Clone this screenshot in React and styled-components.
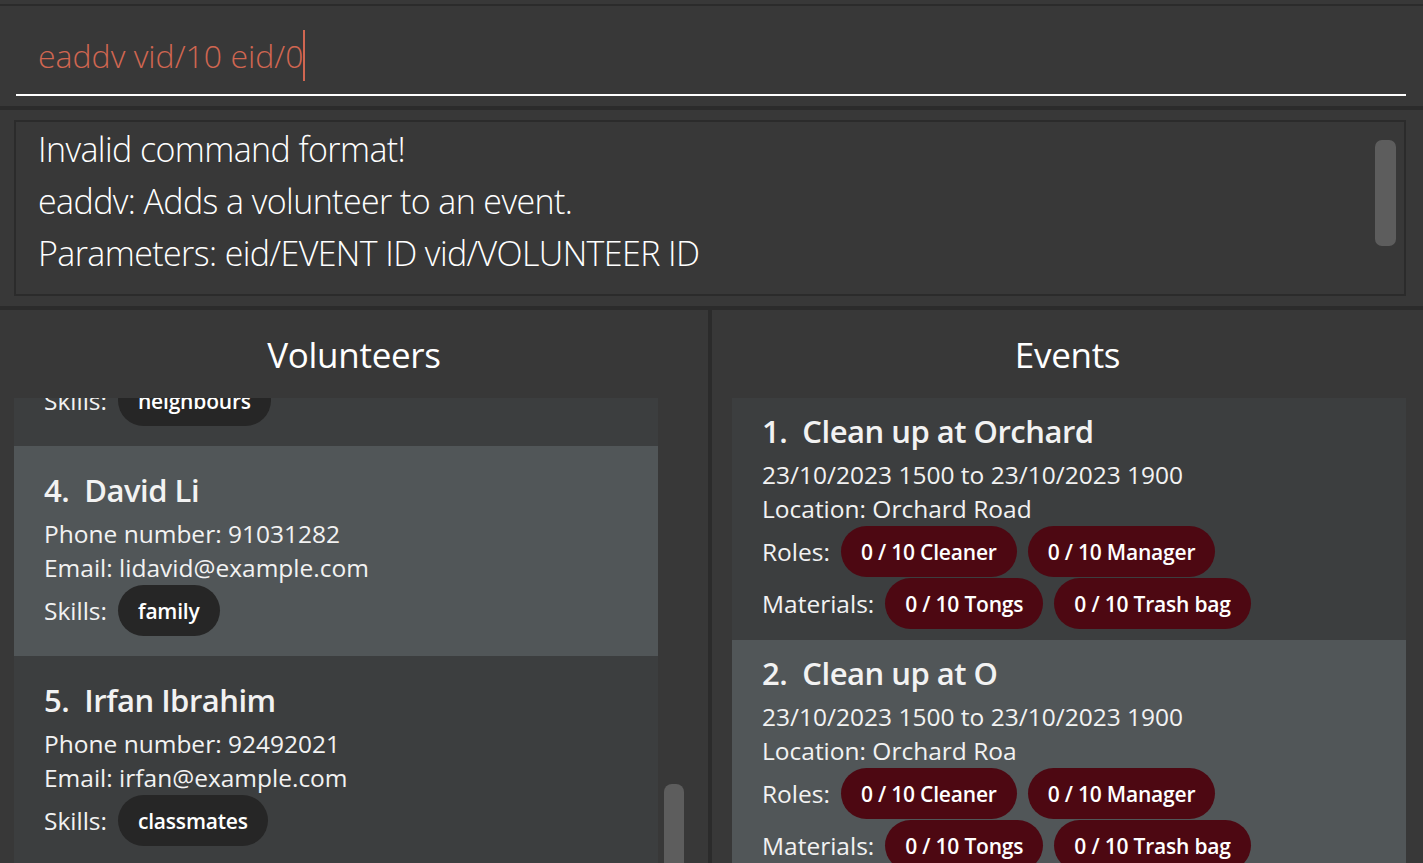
import React, { useLayoutEffect, useRef } from 'react';
import styled, { createGlobalStyle } from 'styled-components';

const volunteers = [
  { id: 1, name: 'Alex Yeoh', phone: '87438807', email: 'alexyeoh@example.com', skills: ['friends'] },
  { id: 2, name: 'Bernice Yu', phone: '99272758', email: 'berniceyu@example.com', skills: ['colleagues', 'friends'] },
  { id: 3, name: 'Charlotte Oliveiro', phone: '93210283', email: 'charlotte@example.com', skills: ['neighbours'] },
  { id: 4, name: 'David Li', phone: '91031282', email: 'lidavid@example.com', skills: ['family'] },
  { id: 5, name: 'Irfan Ibrahim', phone: '92492021', email: 'irfan@example.com', skills: ['classmates'] },
  { id: 6, name: 'Roy Balakrishnan', phone: '92624417', email: 'royb@example.com', skills: ['colleagues'] },
];

const events = [
  {
    id: 1,
    name: 'Clean up at Orchard',
    time: '23/10/2023 1500 to 23/10/2023 1900',
    location: 'Orchard Road',
    roles: ['0 / 10 Cleaner', '0 / 10 Manager'],
    materials: ['0 / 10 Tongs', '0 / 10 Trash bag'],
  },
  {
    id: 2,
    name: 'Clean up at O',
    time: '23/10/2023 1500 to 23/10/2023 1900',
    location: 'Orchard Roa',
    roles: ['0 / 10 Cleaner', '0 / 10 Manager'],
    materials: ['0 / 10 Tongs', '0 / 10 Trash bag'],
  },
];

function App() {
  const listRef = useRef(null);
  const anchorRef = useRef(null);

  // the volunteer list is scrolled so that card 4 sits just under the header
  useLayoutEffect(() => {
    if (listRef.current && anchorRef.current) {
      listRef.current.scrollTop = anchorRef.current.offsetTop - 48;
    }
  }, []);

  return (
    <Window>
      <GlobalStyle />
      <CommandBar>
        <CommandField>
          eaddv vid/10 eid/0
          <Caret />
        </CommandField>
      </CommandBar>

      <ResultBar>
        <ResultBox>
          <ResultLine>Invalid command format!</ResultLine>
          <ResultLine>eaddv: Adds a volunteer to an event.</ResultLine>
          <ResultLine>Parameters: eid/EVENT ID vid/VOLUNTEER ID</ResultLine>
          <ResultThumb />
        </ResultBox>
      </ResultBar>

      <Lists>
        <Panel $width="708px">
          <PanelTitle>Volunteers</PanelTitle>
          <ListArea ref={listRef} $left="14px" $right="50px">
            {volunteers.map((v, i) => (
              <Card key={v.id} ref={v.id === 4 ? anchorRef : null} $odd={i % 2 === 1} $top="24px" $bottom="20px">
                <CardTitle>
                  {v.id}.&nbsp;&nbsp;{v.name}
                </CardTitle>
                <CardLine>Phone number: {v.phone}</CardLine>
                <CardLine>Email: {v.email}</CardLine>
                <ChipRow>
                  <CardLine>Skills:</CardLine>
                  {v.skills.map((s) => (
                    <Chip key={s}>{s}</Chip>
                  ))}
                </ChipRow>
              </Card>
            ))}
          </ListArea>
          <ListThumb />
        </Panel>

        <Divider />

        <Panel>
          <PanelTitle>Events</PanelTitle>
          <ListArea $left="20px" $right="17px">
            {events.map((e, i) => (
              <Card key={e.id} $odd={i % 2 === 1} $top="13px" $bottom="11px">
                <CardTitle>
                  {e.id}.&nbsp;&nbsp;{e.name}
                </CardTitle>
                <CardLine>{e.time}</CardLine>
                <CardLine>Location: {e.location}</CardLine>
                <ChipRow>
                  <CardLine>Roles:</CardLine>
                  {e.roles.map((r) => (
                    <Chip key={r} $tone="event">{r}</Chip>
                  ))}
                </ChipRow>
                <ChipRow $gap="1px">
                  <CardLine>Materials:</CardLine>
                  {e.materials.map((m) => (
                    <Chip key={m} $tone="event">{m}</Chip>
                  ))}
                </ChipRow>
              </Card>
            ))}
          </ListArea>
        </Panel>
      </Lists>
    </Window>
  );
}
export default App;

const GlobalStyle = createGlobalStyle`
  html, body {
    margin: 0;
    padding: 0;
    height: 100%;
    overflow: hidden;
    background: #383838;
  }
  #root {
    height: 100%;
  }
`;

const Window = styled.div`
  height: 100vh;
  display: flex;
  flex-direction: column;
  padding-top: 4px;
  box-sizing: border-box;
  background: #383838;
  font-family: 'Open Sans', 'Noto Sans', sans-serif;
  color: #ffffff;
`;

const CommandBar = styled.div`
  border-top: 2px solid #2b2b2b;
  padding: 24px 17px 10px 16px;
`;

const CommandField = styled.div`
  height: 64px;
  border-bottom: 2px solid #ffffff;
  padding-left: 22px;
  font-size: 32px;
  font-weight: 300;
  line-height: 51px;
  color: #d06651;
  white-space: pre;
`;

const Caret = styled.span`
  display: inline-block;
  width: 2px;
  height: 51px;
  vertical-align: top;
  background: #d06651;
`;

const ResultBar = styled.div`
  border-top: 4px solid #2b2b2b;
  border-bottom: 4px solid #2b2b2b;
  padding: 10px 17px 10px 14px;
`;

const ResultBox = styled.div`
  position: relative;
  height: 176px;
  box-sizing: border-box;
  border: 2px solid #2b2b2b;
  padding: 1px 0 0 22px;
  overflow: hidden;
`;

const ResultLine = styled.div`
  font-size: 34px;
  font-weight: 300;
  letter-spacing: -0.6px;
  line-height: 52px;
  color: #ffffff;
  white-space: nowrap;
`;

const ResultThumb = styled.div`
  position: absolute;
  top: 18px;
  right: 8px;
  width: 21px;
  height: 106px;
  border-radius: 7px;
  background: #5d5d5d;
`;

const Lists = styled.div`
  flex: 1;
  min-height: 0;
  display: flex;
`;

const Panel = styled.section`
  position: relative;
  display: flex;
  flex-direction: column;
  width: ${(p) => p.$width || 'auto'};
  flex: ${(p) => (p.$width ? '0 0 auto' : '1')};
  min-width: 0;
`;

const Divider = styled.div`
  width: 4px;
  background: #2b2b2b;
`;

const PanelTitle = styled.h2`
  margin: 0;
  height: 88px;
  line-height: 90px;
  text-align: center;
  font-size: 35px;
  font-weight: 400;
  letter-spacing: -0.3px;
  color: #ffffff;
`;

const ListArea = styled.div`
  position: relative;
  flex: 1;
  min-height: 0;
  overflow-y: auto;
  scrollbar-width: none;
  padding: 0 ${(p) => p.$right} 0 ${(p) => p.$left};
  &::-webkit-scrollbar {
    display: none;
  }
`;

const ListThumb = styled.div`
  position: absolute;
  left: 664px;
  top: 474px;
  width: 20px;
  height: 220px;
  border-radius: 8px;
  background: #5d5d5d;
`;

const Card = styled.article`
  display: flex;
  flex-direction: column;
  padding: ${(p) => p.$top} 30px ${(p) => p.$bottom};
  background: ${(p) => (p.$odd ? '#515658' : '#3c3e3f')};
`;

const CardTitle = styled.div`
  font-size: 31px;
  font-weight: 600;
  letter-spacing: -0.5px;
  line-height: 40px;
  margin-bottom: 7px;
  color: #f2f2f2;
  white-space: nowrap;
`;

const CardLine = styled.div`
  font-size: 24.5px;
  line-height: 34px;
  color: #f2f2f2;
  white-space: nowrap;
`;

const ChipRow = styled.div`
  display: flex;
  align-items: center;
  gap: 11px;
  margin-top: ${(p) => p.$gap || '0'};
`;

const Chip = styled.span`
  display: inline-flex;
  align-items: center;
  height: 51px;
  padding: 0 20px;
  border-radius: 26px;
  font-size: 21px;
  font-weight: 600;
  letter-spacing: -0.2px;
  color: #ffffff;
  background: ${(p) => (p.$tone === 'event' ? '#4d0812' : '#262626')};
`;
